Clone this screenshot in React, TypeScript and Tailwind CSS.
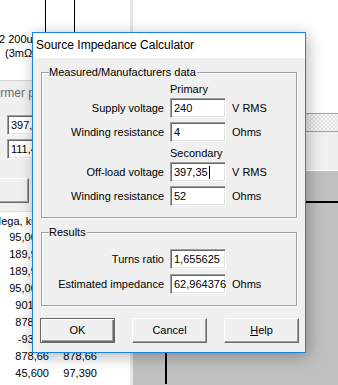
import React from "react";

const sans = "font-['Liberation_Sans',Arial,sans-serif]";

function Field({ value, caret }: { value: string; caret?: boolean }) {
  return (
    <div className="h-[20px] w-[56px] bg-white border-t border-l border-t-[#a0a0a0] border-l-[#a0a0a0] border-b border-r border-b-white border-r-white shadow-[inset_1px_1px_0_#696969,inset_-1px_-1px_0_#e3e3e3] pl-[3px] flex items-center text-[11px] leading-[13px] text-black">
      <span>{value}</span>
      {caret && <span className="ml-px inline-block h-[13px] w-px bg-black" />}
    </div>
  );
}

function Btn({ children, def }: { children?: React.ReactNode; def?: boolean }) {
  return (
    <button
      className={
        "h-[25px] w-[75px] shrink-0 bg-[#f0f0f0] flex items-center justify-center text-[11px] text-black " +
        (def
          ? "border border-[#696969] shadow-[inset_1px_1px_0_#fff,inset_-1px_-1px_0_#696969,inset_-2px_-2px_0_#a0a0a0]"
          : "border border-t-white border-l-white border-b-[#696969] border-r-[#696969] shadow-[inset_-1px_-1px_0_#a0a0a0]")
      }
    >
      {children}
    </button>
  );
}

function Row({ label, value, unit, caret }: { label: string; value: string; unit?: string; caret?: boolean }) {
  return (
    <div className="grid grid-cols-[122px_56px_1fr] gap-x-[6px] items-center h-[20px]">
      <div className="text-right">{label}</div>
      <Field value={value} caret={caret} />
      <div>{unit}</div>
    </div>
  );
}

function Group({ title, children, className }: { title: string; children: React.ReactNode; className?: string }) {
  return (
    <div className={"relative border border-[#a0a0a0] shadow-[inset_1px_1px_0_#fff,1px_1px_0_#fff] " + (className ?? "")}>
      <div className="absolute -top-[7px] left-[7px] bg-[#f0f0f0] pr-px leading-[13px]">{title}</div>
      {children}
    </div>
  );
}

// second column is hidden under the dialog except for the last two rows
const list = [
  ["95,0000", ""],
  ["189,950", ""],
  ["189,950", ""],
  ["95,0000", ""],
  ["901,25", ""],
  ["878,66", ""],
  ["-938,6", ""],
  ["878,66", "878,66"],
  ["45,600", "97,390"],
];

export default function App() {
  return (
    <div className={"relative w-[338px] h-[385px] overflow-hidden bg-white text-[11px] leading-[13px] text-black " + sans}>
      {/* window behind the dialog */}
      <div className="flex h-full">
        <div className="w-[130px] flex flex-col overflow-hidden">
          <div className="relative h-[80px] pt-[33px] whitespace-nowrap">
            <svg className="absolute inset-0" width="130" height="80">
              <line x1="45.5" y1="0" x2="45.5" y2="34" stroke="#000" />
              <line x1="74.5" y1="0" x2="74.5" y2="34" stroke="#000" />
            </svg>
            <div className="relative -ml-[1px]">2 200uF</div>
            <div className="relative ml-[5px] mt-[1px]">(3mΩ)</div>
          </div>
          <div className="h-[131px] bg-[#f0f0f0] border-t border-[#d4d4d4] whitespace-nowrap">
            <div className="-ml-[40px] mt-[6px] text-[12px] leading-[13px] text-[#6d6d6d]">Transformer parameters</div>
            <div className="ml-[7px] mt-[15px]">
              <Field value="397,35" />
            </div>
            <div className="ml-[7px] mt-[4px]">
              <Field value="111,47" />
            </div>
            <div className="mt-[19px] flex gap-[4px] -ml-[46px]">
              <Btn />
              <Btn />
            </div>
          </div>
          <div className="flex-1 bg-white border-t border-[#e3e3e3] whitespace-nowrap">
            <div className="h-[17px] pt-[3px] -ml-[8px]">Mega, kOhm</div>
            {list.map((r, i) => (
              <div key={i} className="h-[17px] flex items-center">
                <div className="w-[49px] text-right">{r[0]}</div>
                <div className="w-[48px] text-right">{r[1]}</div>
              </div>
            ))}
          </div>
        </div>
        <div className="w-[3px] bg-[#e6e6e6]" />
        <div className="flex-1 flex flex-col">
          <div className="h-[113px] bg-white" />
          <div className="h-[19px] border-y border-[#a0a0a0] bg-[repeating-conic-gradient(#e2e2e2_0_25%,#f6f6f6_0_50%)] bg-[length:4px_4px]" />
          <div className="h-[39px] bg-[#f0f0f0] border-b border-white" />
          <div className="relative flex-1 bg-[#c0c0c0]">
            <svg className="absolute inset-0" width="205" height="213">
              <rect x="0" y="30" width="205" height="2" fill="#000" />
              <rect x="32" y="32" width="2" height="200" fill="#000" />
            </svg>
          </div>
        </div>
      </div>

      {/* dialog */}
      <div className="absolute left-[32px] top-[32px] w-[274px] h-[321px] border border-[#1b84dc] bg-[#f0f0f0] shadow-[2px_3px_14px_rgba(0,0,0,0.3)] flex flex-col">
        <div className="h-[25px] bg-white flex items-center pl-[3px] text-[12px] text-black">
          Source Impedance Calculator
        </div>
        <div className="flex-1 px-[8px] pt-[14px]">
          <Group title="Measured/Manufacturers data" className="pt-[8px] pb-[11px]">
            <div className="h-[17px] flex items-center pl-[128px]">Primary</div>
            <Row label="Supply voltage" value="240" unit="V RMS" />
            <div className="mt-[4px]">
              <Row label="Winding resistance" value="4" unit="Ohms" />
            </div>
            <div className="h-[20px] flex items-end pb-[2px] pl-[128px]">Secondary</div>
            <Row label="Off-load voltage" value="397,35" unit="V RMS" caret />
            <div className="mt-[4px]">
              <Row label="Winding resistance" value="52" unit="Ohms" />
            </div>
          </Group>
          <Group title="Results" className="mt-[14px] pt-[16px] pb-[11px]">
            <Row label="Turns ratio" value="1,655625" />
            <div className="mt-[5px]">
              <Row label="Estimated impedance" value="62,964376" unit="Ohms" />
            </div>
          </Group>
          <div className="mt-[12px] -ml-[1px] -mr-[2px] flex justify-between">
            <Btn def>OK</Btn>
            <Btn>Cancel</Btn>
            <Btn>
              <span className="underline">H</span>elp
            </Btn>
          </div>
        </div>
      </div>
    </div>
  );
}
